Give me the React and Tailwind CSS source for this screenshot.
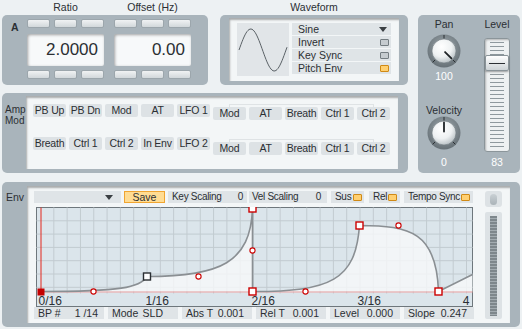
import clsx from 'clsx'

const panel = 'rounded-[5px] bg-[#a9b4bb]'
const well = 'bg-[#f3f6f7] shadow-[inset_1px_2px_2px_rgba(0,0,0,0.3)]'

const TinyBtn = () => (
  <div className="h-[9px] w-[23px] rounded-[2px] border border-[#9ca6ac] bg-linear-to-b from-[#f0f2f3] to-[#d2d8db]" />
)

const TinyRow = () => (
  <div className="flex gap-[4px]">
    <TinyBtn />
    <TinyBtn />
    <TinyBtn />
  </div>
)

const ValueBox = ({ value }) => (
  <div className="flex w-[77px] flex-col">
    <TinyRow />
    <div className="mt-[6px] flex h-[32px] items-center justify-end rounded-[2px] bg-[#f7f9fa] pr-[6px] text-[17px] text-[#2b2f33] shadow-[inset_1px_1px_3px_rgba(0,0,0,0.35)]">
      {value}
    </div>
    <div className="mt-[4px]">
      <TinyRow />
    </div>
  </div>
)

const Check = ({ on }) => (
  <div
    className={clsx(
      'h-[7px] w-[9px] shrink-0 rounded-[1px] border',
      on ? 'border-[#d08a16] bg-[#ffd071]' : 'border-[#737c81] bg-[#c5cbcf]',
    )}
  />
)

const SineWave = () => {
  const pts = []
  for (let x = 2; x <= 50; x += 1) {
    const y = 27 - 21 * Math.sin(((x - 2) / 47) * Math.PI * 2)
    pts.push(`${x},${y.toFixed(2)}`)
  }
  return (
    <svg width="52" height="53" className="block">
      <polyline points={pts.join(' ')} fill="none" stroke="#5a6166" strokeWidth="1" />
    </svg>
  )
}

const OptRow = ({ label, children }) => (
  <div className="flex h-[12px] items-center justify-between bg-[#dfe4e7] pl-[6px] pr-[2px] text-[10.5px] leading-none text-[#2b2f33]">
    <span>{label}</span>
    {children}
  </div>
)

const Knob = ({ id, angle }) => {
  const rad = (a) => ((a - 90) * Math.PI) / 180
  const pt = (a, r) => [18 + r * Math.cos(rad(a)), 18 + r * Math.sin(rad(a))]
  const tick = (a) => {
    const [x1, y1] = pt(a, 12.5)
    const [x2, y2] = pt(a, 16)
    return <line key={a} x1={x1} y1={y1} x2={x2} y2={y2} stroke="#2a2f33" strokeWidth="1" />
  }
  const [px1, py1] = pt(angle, 1.5)
  const [px2, py2] = pt(angle, 10.5)
  return (
    <svg width="36" height="36" className="block">
      <defs>
        <radialGradient id={`${id}-ring`} cx="50%" cy="40%" r="60%">
          <stop offset="0%" stopColor="#a3adb2" />
          <stop offset="100%" stopColor="#667076" />
        </radialGradient>
        <radialGradient id={`${id}-cap`} cx="40%" cy="32%" r="70%">
          <stop offset="0%" stopColor="#ffffff" />
          <stop offset="60%" stopColor="#eef1f2" />
          <stop offset="100%" stopColor="#b9c1c5" />
        </radialGradient>
      </defs>
      <circle cx="18" cy="18" r="16.5" fill={`url(#${id}-ring)`} />
      {[-135, 0, 135].map(tick)}
      <circle cx="18" cy="18" r="12" fill={`url(#${id}-cap)`} stroke="#6f797e" strokeWidth="0.6" />
      <line x1={px1} y1={py1} x2={px2} y2={py2} stroke="#1f2326" strokeWidth="1.8" strokeLinecap="round" />
    </svg>
  )
}

const ModBtn = ({ children }) => (
  <div className="flex h-[13px] w-[33px] items-center justify-center whitespace-nowrap rounded-[2px] bg-[#dde2e5] text-[10.5px] leading-none tracking-[-0.2px] text-[#2b2f33]">
    {children}
  </div>
)

const ModGroup = ({ items, className }) => (
  <div className={clsx('flex gap-[3px]', className)}>
    {items.map((t, i) => (
      <ModBtn key={i}>{t}</ModBtn>
    ))}
  </div>
)

const EnvGraph = () => {
  const vx = []
  for (let k = 1; 40 + k * 13.3125 < 472; k++) vx.push(40 + k * 13.3125)
  const hy = []
  for (let k = 1; k <= 6; k++) hy.push(207 + k * 13.3)
  const curve =
    'M40,291 C120,291 140,287 146.5,276 C220,276 250,262 252,208 L252,291 C330,291 355,280 359,225 C410,225 436,232 438,291 L472,274'
  // breakpoints: [x, y, stroke]
  const sq = [
    [146.5, 276, '#2b2f33'],
    [252, 208, '#cc0000'],
    [252, 291, '#cc0000'],
    [359, 225, '#cc0000'],
    [438, 291, '#cc0000'],
  ]
  const dots = [
    [93, 291],
    [198, 276],
    [252, 250],
    [305, 291],
    [398, 225],
  ]
  const labels = [
    ['0/16', 38, 'start'],
    ['1/16', 145, 'start'],
    ['2/16', 251, 'start'],
    ['3/16', 357, 'start'],
    ['4', 469, 'end'],
  ]
  return (
    <svg width="437" height="100" className="block">
      <g transform="translate(-35.5,-206.5)">
        <rect x="36" y="207" width="436" height="99" fill="#dbe5eb" stroke="#6e777c" strokeWidth="1" />
        {vx.map((x) => (
          <line key={x} x1={x} y1="207" x2={x} y2="293" stroke="#c2cbd0" strokeWidth="1" />
        ))}
        {hy.map((y) => (
          <line key={y} x1="36" y1={y} x2="472" y2={y} stroke="#c2cbd0" strokeWidth="1" />
        ))}
        <path d={`${curve} L472,291 L40,291 Z`} fill="#f6f8f9" fillOpacity="0.82" />
        <line x1="40" y1="291.5" x2="472" y2="291.5" stroke="#f0a3a3" strokeWidth="1" />
        <line x1="40.5" y1="207" x2="40.5" y2="291" stroke="#e3261c" strokeWidth="1" />
        <path d={curve} fill="none" stroke="#8a8f93" strokeWidth="1.6" />
        {dots.map(([x, y]) => (
          <circle key={`${x}-${y}`} cx={x} cy={y} r="2.6" fill="#fff" stroke="#cc0000" strokeWidth="1.1" />
        ))}
        {sq.map(([x, y, c]) => (
          <rect key={`${x}-${y}`} x={x - 3.5} y={y - 3.5} width="7" height="7" fill="#fff" stroke={c} strokeWidth="1.4" />
        ))}
        <rect x="37" y="288" width="7" height="7" fill="#c40000" />
        {labels.map(([t, x, a]) => (
          <text
            key={t}
            x={x}
            y="304"
            textAnchor={a}
            fontFamily="Liberation Sans, sans-serif"
            fontSize="12"
            fill="#2b2f33"
          >
            {t}
          </text>
        ))}
      </g>
    </svg>
  )
}

const Field = ({ label, value, className }) => (
  <div
    className={clsx(
      'flex h-[12px] w-[70px] items-center justify-between whitespace-nowrap bg-[#dfe4e7] pl-[4px] text-[10.5px] leading-none text-[#2b2f33]',
      className,
    )}
  >
    <span>{label}</span>
    <span>{value}</span>
  </div>
)

export default function App() {
  return (
    <div className="flex h-[329px] w-[522px] flex-col overflow-hidden bg-[#edf1f3] pl-[2px] font-['Liberation_Sans',_sans-serif] text-[#2b2f33]">
      <div className="flex">
        <div className="flex w-[406px] flex-col">
          <div className="flex">
            {/* operator ratio / offset */}
            <div className="w-[206px]">
              <div className="flex h-[15px] items-center gap-[10px] pl-[25px] text-[10.5px]">
                <span className="w-[77px] text-center">Ratio</span>
                <span className="w-[77px] text-center">Offset (Hz)</span>
              </div>
              <div className={clsx(panel, 'flex h-[70px] pt-[4px]')}>
                <div className="w-[25px] pl-[9px] pt-[3px] text-[10.5px] font-bold leading-[10px]">A</div>
                <ValueBox value="2.0000" />
                <div className="ml-[10px]">
                  <ValueBox value="0.00" />
                </div>
              </div>
            </div>

            {/* waveform */}
            <div className="ml-[12px] w-[188px]">
              <div className="flex h-[15px] items-center justify-center text-[10.5px]">Waveform</div>
              <div className={clsx(panel, 'h-[70px] px-[9px] pt-[3px]')}>
                <div className={clsx(well, 'flex h-[63px] pl-[8px] pt-[5px]')}>
                  <div className="h-[53px] w-[52px] bg-[#e1e5e8]">
                    <SineWave />
                  </div>
                  <div className="ml-[3px] flex w-[99px] flex-col gap-[1px]">
                    <OptRow label="Sine">
                      <svg width="8" height="5" className="mr-[2px]">
                        <path d="M0 0h8L4 5z" fill="#3a3f43" />
                      </svg>
                    </OptRow>
                    <OptRow label="Invert">
                      <Check />
                    </OptRow>
                    <OptRow label="Key Sync">
                      <Check />
                    </OptRow>
                    <OptRow label="Pitch Env">
                      <Check on />
                    </OptRow>
                  </div>
                </div>
              </div>
            </div>
          </div>

          {/* amp mod */}
          <div className={clsx(panel, 'mt-[8px] flex h-[80px] pr-[10px] pt-[3px]')}>
            <div className="w-[24px] pl-[3px] pt-[8px] text-[10px] leading-[11px]">
              <div>Amp</div>
              <div>Mod</div>
            </div>
            <div className={clsx(well, 'h-[73px] flex-1 pl-[7px] pt-[8px]')}>
              <div className="flex items-start">
                <ModGroup items={['PB Up', 'PB Dn', 'Mod', 'AT', 'LFO 1']} />
                <div className="relative ml-[3px] mt-[3px]">
                  <div className="absolute -top-[3px] left-[16px] right-[16px] h-[3px] border-x border-t border-[#dfe3e5]" />
                  <ModGroup items={['Mod', 'AT', 'Breath', 'Ctrl 1', 'Ctrl 2']} />
                </div>
              </div>
              <div className="mt-[17px] flex items-start">
                <ModGroup items={['Breath', 'Ctrl 1', 'Ctrl 2', 'In Env', 'LFO 2']} />
                <div className="relative ml-[3px] mt-[5px]">
                  <div className="absolute -top-[3px] left-[16px] right-[16px] h-[3px] border-x border-t border-[#dfe3e5]" />
                  <ModGroup items={['Mod', 'AT', 'Breath', 'Ctrl 1', 'Ctrl 2']} />
                </div>
              </div>
            </div>
          </div>
        </div>

        {/* pan / velocity / level */}
        <div className={clsx(panel, 'ml-[10px] mt-[15px] flex h-[158px] w-[102px]')}>
          <div className="flex w-[52px] flex-col items-center pt-[4px] text-[10.5px]">
            <div className="leading-[10px]">Pan</div>
            <div className="mt-[4px]">
              <Knob id="pan" angle={135} />
            </div>
            <div className="mt-[1px] leading-[12px] text-white">100</div>
            <div className="mt-[23px] leading-[10px]">Velocity</div>
            <Knob id="vel" angle={0} />
            <div className="mt-[5px] leading-[12px] text-white">0</div>
          </div>
          <div className="ml-[14px] flex w-[26px] flex-col items-center pt-[4px] text-[10.5px]">
            <div className="leading-[10px]">Level</div>
            <div className="relative mt-[9px] h-[114px] w-[26px] rounded-[3px] border border-[#8b959a] bg-[#eef1f2] shadow-[inset_1px_1px_2px_rgba(0,0,0,0.25)]">
              <div className="mx-auto mt-[3px] h-[106px] w-[14px] bg-[repeating-linear-gradient(to_bottom,#8f999e_0px,#8f999e_1px,transparent_1px,transparent_4px)]" />
              <div className="absolute left-0 top-[16px] flex h-[16px] w-[24px] items-center justify-center rounded-[2px] border border-[#8a9499] bg-linear-to-b from-[#ffffff] to-[#cdd3d6] shadow-[0_1px_2px_rgba(0,0,0,0.35)]">
                <div className="h-[1px] w-[16px] bg-[#2b2f33]" />
              </div>
            </div>
            <div className="mt-[4px] leading-[12px] text-white">83</div>
          </div>
        </div>
      </div>

      {/* envelope */}
      <div className={clsx(panel, 'mt-[9px] flex h-[145px] w-[518px] pr-[10px] pt-[4px]')}>
        <div className="w-[25px] pl-[4px] pt-[6px] text-[10.5px] leading-[10px]">Env</div>
        <div className={clsx(well, 'flex h-[137px] flex-1')}>
          <div className="w-[458px] pl-[7px] pt-[5px]">
            <div className="flex h-[12px] whitespace-nowrap text-[10px] leading-none tracking-[-0.3px]">
              <div className="flex w-[87px] items-center justify-end bg-[#dfe4e7] pr-[8px]">
                <svg width="8" height="5">
                  <path d="M0 0h8L4 5z" fill="#3a3f43" />
                </svg>
              </div>
              <div className="ml-[3px] flex w-[41px] items-center justify-center border border-[#f0a531] bg-[#ffdc93] text-[10.5px] tracking-normal">Save</div>
              <div className="ml-[3px] flex w-[79px] items-center justify-between bg-[#dfe4e7] px-[4px]">
                <span>Key Scaling</span>
                <span>0</span>
              </div>
              <div className="ml-[2px] flex w-[78px] items-center justify-between bg-[#dfe4e7] pl-[3px] pr-[6px]">
                <span>Vel Scaling</span>
                <span>0</span>
              </div>
              <div className="ml-[4px] flex w-[33px] items-center justify-between bg-[#dfe4e7] pl-[4px] pr-[2px]">
                <span>Sus</span>
                <Check on />
              </div>
              <div className="ml-[5px] flex w-[31px] items-center justify-between bg-[#dfe4e7] pl-[4px] pr-[3px]">
                <span>Rel</span>
                <Check on />
              </div>
              <div className="ml-[4px] flex w-[69px] items-center justify-between bg-[#dfe4e7] pl-[4px] pr-[3px]">
                <span>Tempo Sync</span>
                <Check on />
              </div>
            </div>
            <div className="ml-[2px] mt-[4px]">
              <EnvGraph />
            </div>
            <div className="flex gap-[4px]">
              <Field label="BP #" value="1 /14" className="pr-[6px]" />
              <Field label="Mode" value="SLD" className="pr-[15px]" />
              <Field label="Abs T" value="0.001" className="pr-[8px]" />
              <Field label="Rel T" value="0.001" className="pr-[7px]" />
              <Field label="Level" value="0.000" className="pr-[7px]" />
              <Field label="Slope" value="0.247" className="pr-[7px]" />
            </div>
          </div>
          <div className="flex w-[17px] flex-col pt-[5px]">
            <div className="flex h-[16px] items-center justify-center rounded-[3px] bg-[#dde2e5]">
              <div className="h-[11px] w-[7px] rounded-full bg-linear-to-b from-[#c9d0d4] to-[#aab3b8]" />
            </div>
            <div className="mt-[5px] flex h-[107px] justify-center rounded-[2px] bg-[#dde2e5] pt-[4px]">
              <div className="h-[100px] w-[7px] bg-[#7e878c] bg-[repeating-linear-gradient(to_bottom,#7e878c_0px,#7e878c_2px,#a3acb1_2px,#a3acb1_3px)]" />
            </div>
          </div>
        </div>
      </div>
    </div>
  )
}
